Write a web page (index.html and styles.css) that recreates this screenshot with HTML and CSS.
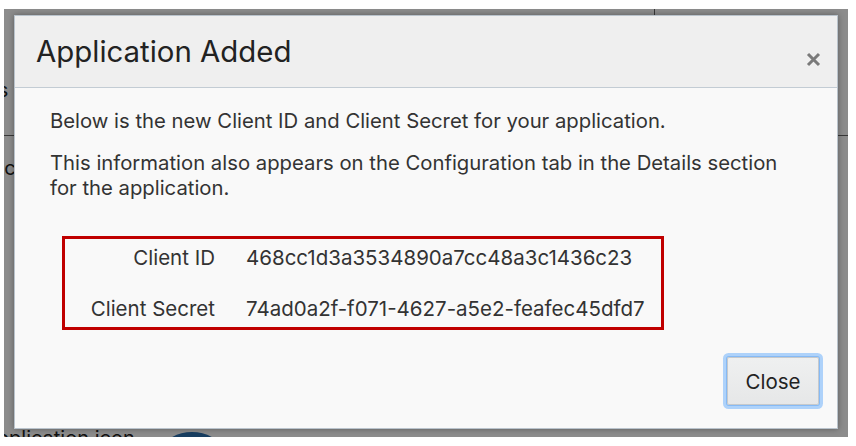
FILE: index.html
```html
<!DOCTYPE html>
<html>
<head>
<meta charset="utf-8">
<link rel="stylesheet" href="styles.css">
</head>
<body>
<div class="page">
  <div class="bg">
    <div class="bg-top"><span class="bg-tab"></span></div>
    <div class="bg-row bg-s">Details</div>
    <div class="bg-rule"></div>
    <div class="bg-row bg-ic">Client Logic</div>
    <div class="bg-row bg-l">Url</div>
    <div class="bg-row bg-app"><span>Application icon</span><span class="bg-ring"></span></div>
  </div>
  <div class="overlay">
    <div class="dialog">
      <div class="dialog-header">
        <h1 class="dialog-title">Application Added</h1>
        <span class="dialog-close" aria-label="Close">
          <svg width="15" height="15" viewBox="0 0 15 15"><path d="M2 2 L13 13 M13 2 L2 13" stroke="#7a7a7a" stroke-width="3" stroke-linecap="butt"/></svg>
        </span>
      </div>
      <div class="dialog-body">
        <p class="msg">Below is the new Client ID and Client Secret for your application.</p>
        <p class="msg">This information also appears on the Configuration tab in the Details section for the application.</p>
        <div class="creds">
          <div class="cred-label">Client ID</div>
          <div class="cred-value">468cc1d3a3534890a7cc48a3c1436c23</div>
          <div class="cred-label">Client Secret</div>
          <div class="cred-value">74ad0a2f-f071-4627-a5e2-feafec45dfd7</div>
        </div>
      </div>
      <div class="dialog-footer">
        <button class="btn">Close</button>
      </div>
    </div>
  </div>
</div>
</body>
</html>
```
FILE: styles.css
```css
html, body {
  margin: 0;
  padding: 0;
  background: #ffffff;
}
body {
  font-family: Inter, "Liberation Sans", Arial, sans-serif;
  color: #333;
  width: 856px;
  height: 446px;
  overflow: hidden;
}
.page {
  position: relative;
  width: 856px;
  height: 446px;
}
.bg {
  position: absolute;
  left: 4px;
  top: 9px;
  width: 844px;
  height: 428px;
  overflow: hidden;
  background: #fff;
  display: flex;
  flex-direction: column;
}
.bg-top {
  height: 6px;
  flex: none;
  display: flex;
  justify-content: flex-end;
}
.bg-tab {
  width: 193px;
  border-left: 1px solid #666;
}
.bg-row {
  font-size: 20px;
  line-height: 24px;
  color: #222;
  white-space: nowrap;
  flex: none;
}
.bg-s {
  margin-top: 63px;
  margin-left: -60px;
}
.bg-rule {
  margin-top: 33px;
  height: 1px;
  flex: none;
  background: #666;
}
.bg-ic {
  margin-top: 20px;
  margin-left: -100px;
}
.bg-l {
  margin-top: 98px;
  margin-left: -28px;
}
.bg-app {
  margin-top: 124px;
  margin-left: -21px;
  display: flex;
  align-items: flex-start;
  gap: 16px;
}
.bg-ring {
  width: 66px;
  height: 66px;
  margin-top: 6px;
  border: 8px solid #2a6fb0;
  border-radius: 50%;
}
.overlay {
  position: absolute;
  left: 4px;
  top: 9px;
  width: 844px;
  height: 428px;
  box-sizing: border-box;
  padding: 6px 10px 8px 10px;
  background: rgba(0, 0, 0, 0.45);
}
.dialog {
  height: 100%;
  box-sizing: border-box;
  border: 1px solid #b9c3cc;
  background: #f9f9f9;
  box-shadow: 0 0 6px rgba(0, 0, 0, 0.35);
  display: flex;
  flex-direction: column;
}
.dialog-header {
  height: 72px;
  flex: none;
  box-sizing: border-box;
  background: #efefef;
  border-bottom: 1px solid #c3ccd4;
  display: flex;
  align-items: center;
  justify-content: space-between;
  padding: 0 16px 0 21px;
}
.dialog-title {
  margin: 0;
  font-size: 29.4px;
  font-weight: 400;
  color: #222;
}
.dialog-close {
  margin-top: 16px;
  display: flex;
}
.dialog-body {
  flex: 1;
  padding: 20px 35px 0 35px;
}
.msg {
  margin: 0 0 17px 0;
  font-size: 20.3px;
  line-height: 25px;
  color: #333;
}
.creds {
  margin: 36px 0 0 12px;
  width: 602px;
  border: 3px solid #c00000;
  box-sizing: border-box;
  display: grid;
  grid-template-columns: 150px auto;
  column-gap: 31px;
  row-gap: 26px;
  padding: 5.5px 0 6.5px 0;
  font-size: 20.5px;
  line-height: 25px;
}
.cred-label {
  text-align: right;
  color: #333;
  white-space: nowrap;
}
.cred-value {
  color: #333;
  white-space: nowrap;
}
.dialog-footer {
  display: flex;
  justify-content: flex-end;
  padding: 0 18px 23px 0;
}
.btn {
  font-family: inherit;
  font-size: 20.5px;
  color: #222;
  width: 92px;
  height: 48px;
  background: linear-gradient(#eff0f0, #e6e7e8);
  border: 1px solid #c6c9cc;
  border-radius: 2px;
  box-shadow: 0 0 0 1px #86baf5, 0 0 0 4px #aed2fa;
}
```
